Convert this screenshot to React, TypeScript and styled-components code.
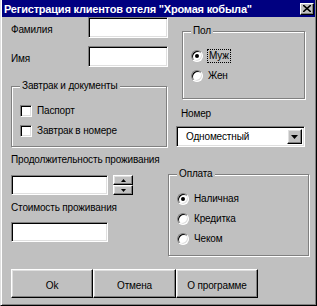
import React from "react";
import styled, { createGlobalStyle } from "styled-components";

const GlobalStyle = createGlobalStyle`
  html, body {
    margin: 0;
    padding: 0;
    background: #c0c0c0;
  }
  body {
    font-family: "Liberation Sans", Arial, sans-serif;
    font-size: 10px;
    letter-spacing: -0.15px;
    color: #000;
  }
`;

const Window = styled.div`
  box-sizing: border-box;
  width: 317px;
  height: 306px;
  padding: 0 1px 1px 1px;
  background: #c0c0c0;
  border-left: 1px solid #dfdfdf;
  border-right: 1px solid #000;
  border-bottom: 1px solid #000;
  box-shadow: inset 1px 0 #fff, inset -1px -1px #808080;
`;

const TitleBar = styled.div`
  height: 17px;
  display: flex;
  align-items: center;
  justify-content: space-between;
  padding-left: 2px;
  background: #000080;
  color: #fff;
  font-weight: bold;
  font-size: 11px;
  letter-spacing: -0.2px;
  white-space: nowrap;
`;

const CloseButton = styled.div`
  box-sizing: border-box;
  width: 14px;
  height: 12px;
  margin-right: 1px;
  display: flex;
  align-items: center;
  justify-content: center;
  background: #c0c0c0;
  border: 1px solid;
  border-color: #fff #000 #000 #fff;
  box-shadow: inset -1px -1px #808080;
`;

const Body = styled.div`
  padding-left: 9px;
`;

const Columns = styled.div`
  display: grid;
  grid-template-columns: 157px 141px;
  align-items: start;
`;

const Column = styled.div`
  display: flex;
  flex-direction: column;
  align-items: flex-start;
`;

const FieldRow = styled.div<{ $top: number }>`
  display: flex;
  align-items: center;
  margin-top: ${(p) => p.$top}px;
`;

const FieldLabel = styled.span`
  width: 77px;
  padding-top: 4px;
`;

const Text = styled.div<{ $top: number; $left?: number }>`
  margin-top: ${(p) => p.$top}px;
  margin-left: ${(p) => p.$left ?? 0}px;
  line-height: 12px;
  white-space: nowrap;
`;

const Field = styled.div<{ $w: number; $h: number; $top?: number }>`
  box-sizing: border-box;
  width: ${(p) => p.$w}px;
  height: ${(p) => p.$h}px;
  margin-top: ${(p) => p.$top ?? 0}px;
  background: #fff;
  border: 1px solid;
  border-color: #808080 #fff #fff #808080;
  box-shadow: inset 1px 1px #000, inset -1px -1px #dfdfdf;
`;

const Group = styled.div<{ $w: number; $h: number; $top: number; $left?: number }>`
  position: relative;
  box-sizing: border-box;
  width: ${(p) => p.$w}px;
  height: ${(p) => p.$h}px;
  margin-top: ${(p) => p.$top}px;
  margin-left: ${(p) => p.$left ?? 0}px;
  padding: 18px 0 0 8px;
  display: flex;
  flex-direction: column;
  gap: 8px;
  border: 1px solid #808080;
  box-shadow: inset 1px 1px #fff, 1px 1px #fff;
`;

const Caption = styled.span`
  position: absolute;
  top: -7px;
  left: 8px;
  padding: 0 2px;
  line-height: 12px;
  background: #c0c0c0;
`;

const Option = styled.label`
  display: flex;
  align-items: center;
  gap: 5px;
  height: 12px;
  line-height: 12px;
  white-space: nowrap;
`;

const Check = styled.span`
  box-sizing: border-box;
  width: 12px;
  height: 12px;
  background: #fff;
  border: 1px solid;
  border-color: #808080 #fff #fff #808080;
  box-shadow: inset 1px 1px #000, inset -1px -1px #dfdfdf;
`;

const Radio = styled.span<{ $on?: boolean }>`
  box-sizing: border-box;
  width: 12px;
  height: 12px;
  display: flex;
  align-items: center;
  justify-content: center;
  border-radius: 50%;
  background: #fff;
  border: 1px solid;
  border-color: #808080 #fff #fff #808080;
  box-shadow: inset 1px 1px #000, inset -1px -1px #dfdfdf;

  &::after {
    content: "";
    display: ${(p) => (p.$on ? "block" : "none")};
    width: 4px;
    height: 4px;
    border-radius: 50%;
    background: #000;
  }
`;

const Focus = styled.span`
  padding: 0 1px;
  line-height: 12px;
  outline: 1px dotted #000;
`;

const SpinRow = styled.div`
  display: flex;
  gap: 5px;
  margin-top: 9px;
`;

const Spin = styled.div`
  display: flex;
  flex-direction: column;
`;

const Raised = styled.div<{ $w: number; $h: number }>`
  box-sizing: border-box;
  width: ${(p) => p.$w}px;
  height: ${(p) => p.$h}px;
  display: flex;
  align-items: center;
  justify-content: center;
  background: #c0c0c0;
  border: 1px solid;
  border-color: #fff #000 #000 #fff;
  box-shadow: inset -1px -1px #808080, inset 1px 1px #dfdfdf;
`;

const Combo = styled.div`
  box-sizing: border-box;
  width: 129px;
  height: 21px;
  margin: 6px 0 0 8px;
  padding: 2px 2px 2px 9px;
  display: flex;
  align-items: center;
  justify-content: space-between;
  background: #fff;
  border: 1px solid;
  border-color: #808080 #fff #fff #808080;
  box-shadow: inset 1px 1px #000, inset -1px -1px #dfdfdf;
`;

const Buttons = styled.div`
  display: flex;
  margin-top: 13px;
`;

const PushButton = styled.div<{ $w: number }>`
  box-sizing: border-box;
  width: ${(p) => p.$w}px;
  height: 29px;
  padding-top: 10px;
  display: flex;
  justify-content: center;
  align-items: flex-start;
  line-height: 12px;
  white-space: nowrap;
  background: #c0c0c0;
  border: 1px solid;
  border-color: #fff #000 #000 #fff;
  box-shadow: inset -1px -1px #808080, inset 1px 1px #dfdfdf;
`;

const Arrow = ({ up, w = 5, h = 3 }: { up?: boolean; w?: number; h?: number }) => (
  <svg width={w} height={h} viewBox={`0 0 ${w} ${h}`}>
    <polygon
      points={up ? `0,${h} ${w},${h} ${w / 2},0` : `0,0 ${w},0 ${w / 2},${h}`}
      fill="#000"
    />
  </svg>
);

export default function App() {
  return (
    <>
      <GlobalStyle />
      <Window>
        <TitleBar>
          <span>Регистрация клиентов отеля "Хромая кобыла"</span>
          <CloseButton>
            <svg width="8" height="7" viewBox="0 0 8 7">
              <path d="M0 0 L8 7 M8 0 L0 7" stroke="#000" strokeWidth="1.6" />
            </svg>
          </CloseButton>
        </TitleBar>
        <Body>
          <Columns>
            <Column>
              <FieldRow $top={0}>
                <FieldLabel>Фамилия</FieldLabel>
                <Field $w={80} $h={21} />
              </FieldRow>
              <FieldRow $top={8}>
                <FieldLabel>Имя</FieldLabel>
                <Field $w={80} $h={21} />
              </FieldRow>
              <Group $w={156} $h={61} $top={19}>
                <Caption>Завтрак и документы</Caption>
                <Option>
                  <Check />
                  Паспорт
                </Option>
                <Option>
                  <Check />
                  Завтрак в номере
                </Option>
              </Group>
              <Text $top={7}>Продолжительность проживания</Text>
              <SpinRow>
                <Field $w={97} $h={20} />
                <Spin>
                  <Raised $w={20} $h={10}>
                    <Arrow up />
                  </Raised>
                  <Raised $w={20} $h={10}>
                    <Arrow />
                  </Raised>
                </Spin>
              </SpinRow>
              <Text $top={7}>Стоимость проживания</Text>
              <Field $w={97} $h={20} $top={8} />
            </Column>
            <Column>
              <Group $w={123} $h={68} $top={14} $left={14}>
                <Caption>Пол</Caption>
                <Option>
                  <Radio $on />
                  <Focus>Муж</Focus>
                </Option>
                <Option>
                  <Radio />
                  Жен
                </Option>
              </Group>
              <Text $top={9} $left={13}>
                Номер
              </Text>
              <Combo>
                <span>Одноместный</span>
                <Raised $w={15} $h={15}>
                  <Arrow w={7} h={4} />
                </Raised>
              </Combo>
              <Group $w={141} $h={82} $top={27}>
                <Caption>Оплата</Caption>
                <Option>
                  <Radio $on />
                  Наличная
                </Option>
                <Option>
                  <Radio />
                  Кредитка
                </Option>
                <Option>
                  <Radio />
                  Чеком
                </Option>
              </Group>
            </Column>
          </Columns>
          <Buttons>
            <PushButton $w={82}>Ok</PushButton>
            <PushButton $w={83}>Отмена</PushButton>
            <PushButton $w={82}>О программе</PushButton>
          </Buttons>
        </Body>
      </Window>
    </>
  );
}
